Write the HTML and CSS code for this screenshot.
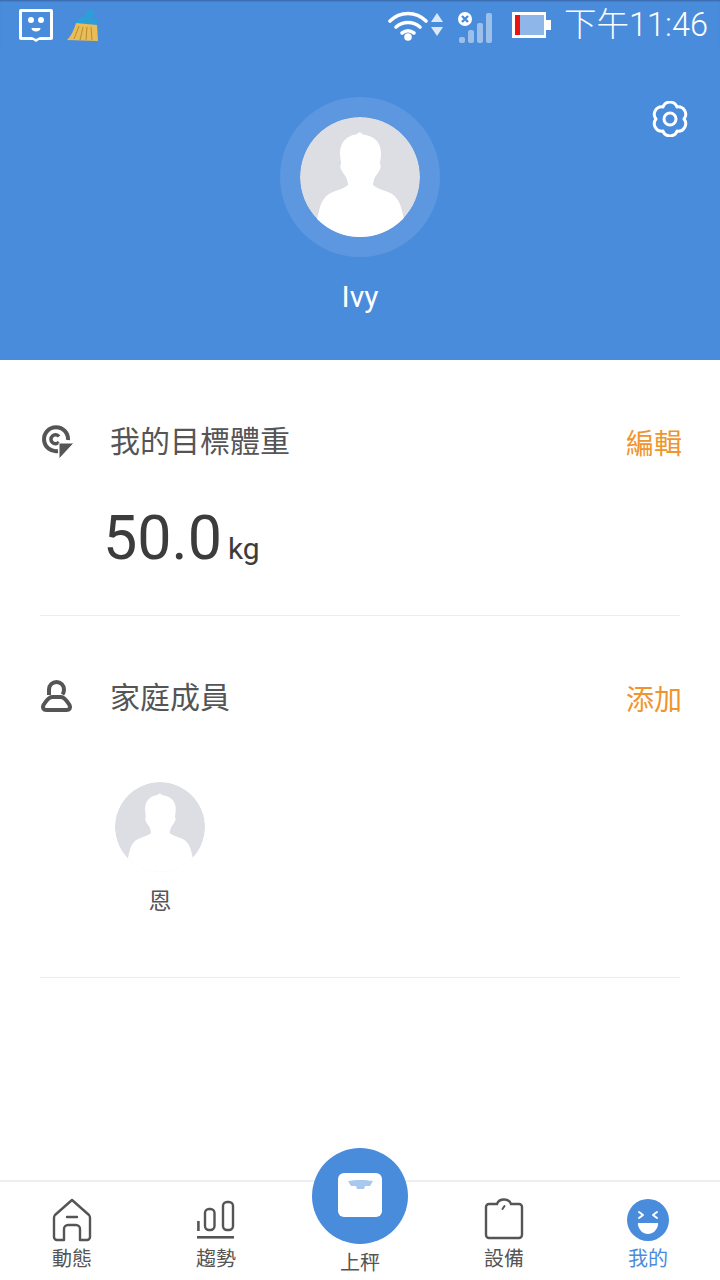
FILE: index.html
```html
<!DOCTYPE html>
<html lang="zh-Hant">
<head>
<meta charset="utf-8">
<title>我的</title>
<link rel="stylesheet" href="styles.css">
</head>
<body>
<div class="app">
  <header class="hero">
    <div class="status">
      <div class="status-left">
        <svg class="ic-msg" width="36" height="34" viewBox="0 0 36 34"><path fill="#fff" d="M3 1h30a2 2 0 0 1 2 2v27a2 2 0 0 1-2 2H21l-3 2-3-2H3a2 2 0 0 1-2-2V3a2 2 0 0 1 2-2z"/><path fill="#4a8cdc" d="M4 4h28v25H22L18 31l-4-2H4z"/><circle cx="13" cy="12" r="3" fill="#fff"/><circle cx="23" cy="12" r="3" fill="#fff"/><path fill="#fff" d="M13.500 20h9c0 2-1.800 3.500-4.500 3.500s-4.500-1.500-4.500-3.500z"/></svg>
        <svg class="ic-broom" width="34" height="34" viewBox="0 0 34 34"><path fill="#2c9fd8" d="M19 8l3-6c1-2 6-1 6 2l-2 6 5 2 1 5-23-2 3-4z"/><path fill="#e8bd57" d="M10 15l21 2 1 16-31-1c4-4 7-10 9-17z"/><path stroke="#b88c30" stroke-width="1" fill="none" d="M8 31l5-13M14 32l3-13M20 32l1-13M26 32l-1-13"/></svg>
      </div>
      <div class="status-right">
        <svg class="ic-wifi" width="40" height="32" viewBox="0 0 40 32"><g fill="none" stroke="#fff" stroke-width="3.600" stroke-linecap="round"><path d="M2 12C12 2 28 2 38 12"/><path d="M8 18c7-6 17-6 24 0"/><path d="M14 24c4-3 8-3 12 0"/></g><circle cx="20" cy="28" r="3.800" fill="#fff"/></svg>
        <svg class="ic-arrows" width="12" height="23" viewBox="0 0 12 23"><path fill="#dbe8f8" d="M6 0l6 9H0zM0 14h12l-6 9z"/></svg>
        <svg class="ic-signal" width="36" height="32" viewBox="0 0 36 32"><circle cx="8" cy="8" r="7" fill="#fff"/><path stroke="#4a8cdc" stroke-width="2.400" d="M5 5l6 6M11 5l-6 6"/><g fill="#9dc0ea"><rect x="2" y="26" width="6" height="6" rx="2"/><rect x="11" y="19" width="6" height="13" rx="2"/><rect x="20" y="12" width="6" height="20" rx="2"/><rect x="29" y="2" width="6" height="30" rx="2"/></g></svg>
        <svg class="ic-batt" width="39" height="26" viewBox="0 0 39 26"><path fill="#fff" d="M0 0h34v26H0zM34 8h5v10h-5z"/><rect x="3" y="3" width="29" height="20" fill="#8fb6e8"/><rect x="3" y="3" width="5" height="20" fill="#ee1111"/></svg>
        <span class="clock">下午11:46</span>
      </div>
    </div>
    <svg class="gear" width="36" height="36" viewBox="0 0 36 36"><path fill="none" stroke="#fff" stroke-width="3" stroke-linejoin="round" d="M11 5.900A7.500 7.500 0 0 1 25 5.900 7.500 7.500 0 0 1 32 18 7.500 7.500 0 0 1 25 30.100 7.500 7.500 0 0 1 11 30.100 7.500 7.500 0 0 1 4 18 7.500 7.500 0 0 1 11 5.900z"/><circle cx="18" cy="18" r="6" fill="none" stroke="#fff" stroke-width="3"/></svg>
    <div class="avatar-ring">
      <svg class="avatar" width="120" height="120" viewBox="0 0 120 120"><use href="#person"/></svg>
    </div>
    <div class="name">Ivy</div>
  </header>

  <main class="content">
    <section class="panel panel-goal">
      <div class="row">
        <svg class="row-ic" width="36" height="36" viewBox="0 0 36 36"><path fill="none" stroke="#555" stroke-width="4" d="M18 27A12 12 0 1 1 28 16"/><path fill="none" stroke="#555" stroke-width="3.500" d="M19 12.500A4.500 4.500 0 1 0 19 18"/><path fill="#555" stroke="#fff" stroke-width="1" d="M19 19h15L19 35z"/></svg>
        <h2 class="row-title">我的目標體重</h2>
        <span class="row-action">編輯</span>
      </div>
      <div class="goal"><span class="goal-num">50.0</span><span class="goal-unit">kg</span></div>
    </section>
    <section class="panel panel-family">
      <div class="row">
        <svg class="row-ic" width="36" height="36" viewBox="0 0 36 36"><g fill="none" stroke="#555" stroke-width="4"><path d="M9 15V9.500a7.500 7.500 0 0 1 15 0c0 2-.5 3.500-1.500 5"/><path d="M12 17h9c3 0 6 4 8.500 8 1.500 3 0 5-3 5H6.500c-3 0-4.500-2-3-5C6 21 9 17 12 17z"/></g></svg>
        <h2 class="row-title">家庭成員</h2>
        <span class="row-action">添加</span>
      </div>
      <div class="member">
        <svg width="90" height="90" viewBox="0 0 120 120"><use href="#person"/></svg>
        <div class="member-name">恩</div>
      </div>
    </section>
  </main>

  <nav class="tabs">
    <div class="tab">
      <svg width="42" height="44" viewBox="0 0 42 44"><g fill="none" stroke="#555" stroke-width="2.400" stroke-linejoin="round" stroke-linecap="round"><path d="M21 2L38 17c.8.8 1 1.500 1 3v19a3 3 0 0 1-3 3h-7V31a4 4 0 0 0-4-4h-8a4 4 0 0 0-4 4v11H6a3 3 0 0 1-3-3V20c0-1.500.2-2.200 1-3z"/><path d="M16 19h10"/></g></svg>
      <span>動態</span>
    </div>
    <div class="tab">
      <svg width="42" height="44" viewBox="0 0 42 44"><g fill="none" stroke="#555" stroke-width="2.400"><path d="M3.400 23v10" stroke-width="2.600"/><rect x="10" y="11" width="9.500" height="21" rx="4"/><rect x="28" y="4" width="10" height="28" rx="4"/></g><rect x="2" y="38" width="37" height="2.600" fill="#555"/></svg>
      <span>趨勢</span>
    </div>
    <div class="tab tab-center">
      <div class="scale-btn">
        <svg width="44" height="44" viewBox="0 0 44 44"><rect width="44" height="44" rx="6" fill="#fff"/><path fill="#a8c8ee" d="M10 8c7-1.500 18-1.500 25 0l-3 5-5 0-1 3h-7l-1-3-5 0z"/></svg>
      </div>
      <span>上秤</span>
    </div>
    <div class="tab">
      <svg width="42" height="44" viewBox="0 0 42 44"><g fill="none" stroke="#555" stroke-width="2.400" stroke-linecap="round"><path d="M6 6h8c1-3 4-4.500 7-4.500S27 3 28 6h8a3 3 0 0 1 3 3v28a3 3 0 0 1-3 3H6a3 3 0 0 1-3-3V9a3 3 0 0 1 3-3z"/><path d="M19.500 11l2-3" stroke-width="2"/></g></svg>
      <span>設備</span>
    </div>
    <div class="tab tab-active">
      <svg width="42" height="44" viewBox="0 0 42 44"><circle cx="21" cy="22" r="21" fill="#4a8cdc"/><g fill="none" stroke="#fff" stroke-width="2" stroke-linecap="round" stroke-linejoin="round"><path d="M12 14l4 3-4 3"/><path d="M30 14l-4 3 4 3"/></g><path fill="#fff" d="M12 25h18c1 0 1.500.5 1 2-1 5-5 9-10 9s-9-4-10-9c-.5-1.500 0-2 1-2z"/></svg>
      <span>我的</span>
    </div>
  </nav>
</div>

<svg class="defs" width="0" height="0">
  <defs>
    <clipPath id="disc"><circle cx="60" cy="60" r="60"/></clipPath>
    <g id="person" clip-path="url(#disc)">
      <circle cx="60" cy="60" r="60" fill="#dddee3"/>
      <path fill="#fff" d="M60 15c1 1.500 3 3 6 3 9 2 15 8 15 18 0 5-1 8-1 11 1 2 1 3 0 5-1 3-3 5-5 8-1 3-2 5-2 8 3 3 10 5 15 7 8 3 11 9 13 15l3 12-4 20H24l-7-20 3-12c2-6 5-12 13-15 5-2 12-4 15-7 0-3-1-5-2-8-2-3-4-5-5-8-1-2-1-3 0-5 0-3-1-6-1-11 0-10 6-16 13-18 3 0 5-1.500 7-3z"/>
    </g>
  </defs>
</svg>
</body>
</html>
```
FILE: styles.css
```css
* { box-sizing: border-box; }
html, body { margin: 0; padding: 0; background: #fff; }
body { font-family: "Noto Sans CJK TC", "Noto Sans", Roboto, sans-serif; }
.app { width: 720px; height: 1280px; display: flex; flex-direction: column; overflow: hidden; }
.defs { position: absolute; }

.hero { height: 360px; background: #4a8cdc; position: relative; display: flex; flex-direction: column; align-items: center; }
.status { width: 100%; height: 50px; padding: 8px 12px 0 18px; display: flex; justify-content: space-between; align-items: flex-start; color: #fff; box-shadow: inset 0 2px 2px -1px rgba(40,60,110,.5); }
.status-left { display: flex; gap: 12px; }
.status-right { display: flex; align-items: flex-start; }
.ic-wifi { margin-top: 1px; }
.ic-arrows { margin: 5px 0 0 3px; }
.ic-signal { margin: 3px 0 0 14px; }
.ic-batt { margin: 4px 0 0 19px; }
.clock { margin-left: 13px; font-family: Roboto, "Noto Sans CJK TC", sans-serif; font-size: 32.500px; font-weight: 300; line-height: 34px; white-space: nowrap; }
.gear { position: absolute; left: 652px; top: 101px; }
.avatar-ring { margin-top: 47px; width: 160px; height: 160px; padding: 20px; border-radius: 50%; background: rgba(255,255,255,.1); }
.avatar { display: block; }
.name { margin-top: 20px; font-family: Roboto, sans-serif; font-size: 30px; line-height: 40px; color: #fff; }

.content { flex: 1; padding: 0 40px; color: #444; }
.panel { border-bottom: 1px solid #ececec; }
.panel-goal { height: 256px; padding-top: 62px; }
.panel-family { height: 362px; padding-top: 62px; }
.row { display: flex; align-items: center; height: 40px; }
.row-ic { flex: none; }
.row-title { flex: 1; margin: -6px 0 0 34px; font-size: 30px; font-weight: 400; line-height: 40px; color: #555; }
.row-action { font-size: 28px; line-height: 40px; color: #f0952c; margin-right: -2px; }
.goal { margin: 38px 0 0 63px; display: flex; align-items: baseline; }
.goal-num { font-family: Roboto, sans-serif; font-size: 61px; line-height: 76px; color: #3c3c3c; }
.goal-unit { margin-left: 6px; font-family: Roboto, sans-serif; font-size: 30px; color: #3c3c3c; }
.member { width: 90px; margin: 64px 0 0 75px; text-align: center; }
.member svg { display: block; }
.member-name { margin-top: 12px; font-size: 23px; line-height: 30px; color: #555; }

.tabs { height: 100px; border-top: 2px solid #eee; display: grid; grid-template-columns: repeat(5, 144px); position: relative; }
.tab { display: flex; flex-direction: column; align-items: center; padding-top: 16px; font-size: 20px; line-height: 30px; color: #555; }
.tab svg { display: block; margin-bottom: 1px; }
.tab-active { color: #4a8cdc; }
.tab-center { padding-top: 65px; }
.scale-btn { position: absolute; left: 312px; top: -34px; width: 96px; height: 96px; border-radius: 50%; background: #4a8cdc; display: flex; align-items: center; justify-content: center; }
.scale-btn svg { margin-bottom: 2px; }
```
